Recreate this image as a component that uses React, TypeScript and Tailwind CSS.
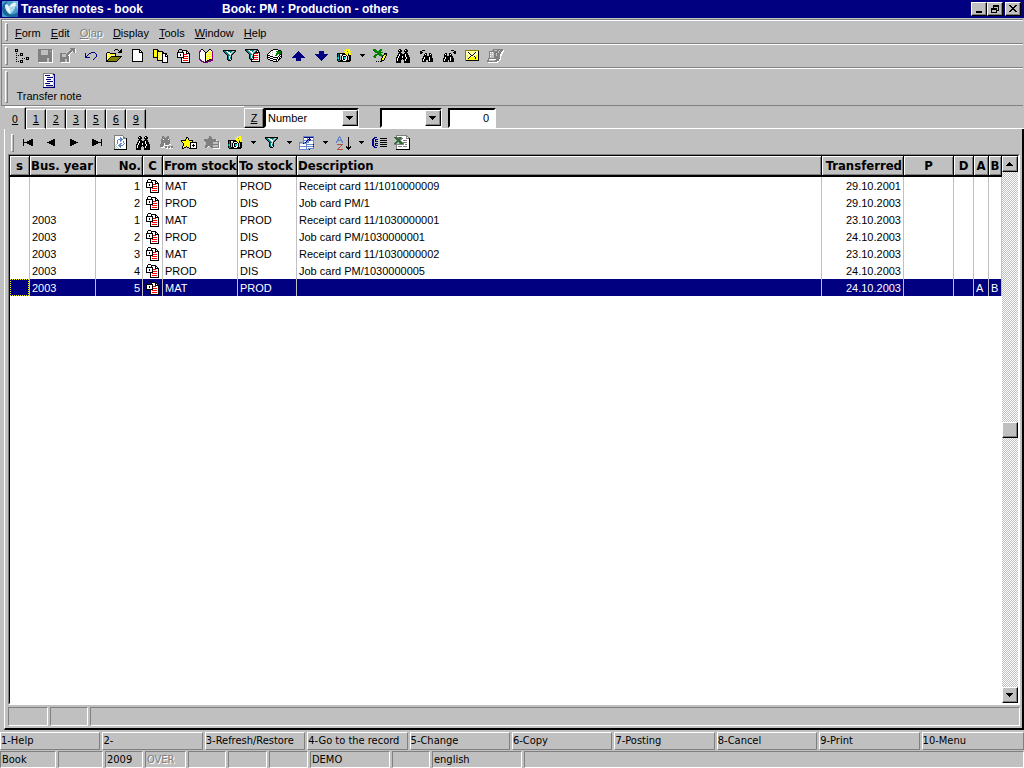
import React from 'react';

const PALETTE: Record<string, string> = {
  k: '#000000',
  w: '#ffffff',
  g: '#808080',
  l: '#c0c0c0',
  y: '#ffff00',
  c: '#ffff99',
  o: '#808000',
  b: '#000080',
  s: '#6688cc',
  t: '#008080',
  a: '#00e0e0',
  r: '#ff0000',
  d: '#b05040',
  p: '#800080',
  n: '#008000',
  m: '#a8d0b8',
  e: '#2f6b2f',
};

// Each string is a row of pixels, each letter a palette colour
const ICONS: Record<string, string[]> = {
  tree: [
    'kkk............',
    'k.k............',
    'kkk............',
    '...............',
    '.k...kkk.......',
    '.....k.k.......',
    '.k.k.kkk.......',
    '...............',
    '.k.........kkk.',
    '.......k.k.k.k.',
    '.k.........kkk.',
    '.....kkk.......',
    '.k.k.k.k.......',
    '.....kkk.......',
  ],
  save: [
    'gggggggggggggg.',
    'ggglllllllggggw',
    'ggglllllllgglgw',
    'ggglllllllggggw',
    'ggglllllllggggw',
    'ggglllllllggggw',
    'ggggggggggggggw',
    'ggggggggggggggw',
    'ggggggggggggggw',
    'gggggggggllgggw',
    'gggggggggllgggw',
    'gggggggggllgggw',
    'gggggggggllgggw',
    '.wwwwwwwwwwwwww',
  ],
  saveAs: [
    '..........ggggg.',
    '...........ggggw',
    '..........gggggw',
    '.........gggwggw',
    '........gggw..gw',
    'gggggg.gggw.....',
    'ggllllgggw......',
    'ggllllggww......',
    'ggllllgggw......',
    'gggggggggw......',
    'gggggggggw......',
    'gggggllggw......',
    'gggggllggw......',
    'gggggllggw......',
    '.wwwwwwwww......',
  ],
  undo: [
    '......bbbb...',
    'b...bb....b..',
    'b..b.......b.',
    'b.b........b.',
    'bb.........b.',
    'bbbbb.....b..',
    '.........b...',
    '........b....',
  ],
  open: [
    '.........kkk...k',
    '........k...k.kk',
    '.............kkk',
    '.kkk........kkkk',
    'kycykkkkkk......',
    'kcycycycyk......',
    'kycycycyck......',
    'kcycykkkkkkkkkkk',
    'kycykoooooooook.',
    'kcykoooooooook..',
    'kykoooooooook...',
    'kkoooooooook....',
    'kkkkkkkkkkk.....',
  ],
  page: [
    'kkkkkkkk...',
    'kwwwwwwkk..',
    'kwwwwwwkwk.',
    'kwwwwwwkkkk',
    'kwwwwwwwwwk',
    'kwwwwwwwwwk',
    'kwwwwwwwwwk',
    'kwwwwwwwwwk',
    'kwwwwwwwwwk',
    'kwwwwwwwwwk',
    'kwwwwwwwwwk',
    'kwwwwwwwwwk',
    'kkkkkkkkkkk',
  ],
  copies: [
    'kkkkk..........',
    'kyyykk.........',
    'kywykkkkkk.....',
    'kyyykcyyckk....',
    'kywykyccykkkkk.',
    'kyyykcycckwwkk.',
    'kywykyccykwwkwk',
    'kyyykcycckwwkkk',
    'kkkkkyccykwwwwk',
    '....kcycckwwwwk',
    '....kyccykwwwwk',
    '....kkkkkkwwwwk',
    '.........kwwwwk',
    '.........kkkkkk',
  ],
  lockPage: [
    '..kkk........',
    '.k...kkkkk...',
    '.k...kwwwkk..',
    'kkkkkkkwwkwk.',
    'kwwwwwkwwkkkk',
    'kwwkwwkrrrwwk',
    'kwwkwwkwwwwwk',
    'kwwwwwkrrrrwk',
    'kkkkkkkwwwwwk',
    '....kwrrrrrwk',
    '....kwwwwwwwk',
    '....kwrrrrrwk',
    '....kwwwwwwwk',
    '....kkkkkkkkk',
  ],
  book: [
    '..kk......kk...',
    '.pwwk....kcck..',
    'ppwwwk..kcccwp.',
    'pwwwwwkkcycycp.',
    'pwwwwwkcycycyp.',
    'pwwwwwkycycycp.',
    'pwwwwwkcycycyp.',
    'pwwwwwkycycycp.',
    'pwwwwwkcycycyp.',
    'pwwwwwkycycycp.',
    'ppwwwwkcyckkpp.',
    '.ppwwwkckkpppp.',
    '..pppwkkpppp...',
    '....ppkpp......',
  ],
  filter: [
    'kkkkkkkkkkkkk',
    'kttlwttttlltk',
    '.kttlwwtlltk.',
    '..kttlwwltk..',
    '...kttlwtk...',
    '....kttlk....',
    '....ktwlk....',
    '....ktwtk....',
    '....ktwtk....',
    '....kttwk....',
    '.....kkk.....',
  ],
  filterPage: [
    'kkkkkkkkkkkkk..',
    'kttlwttttlltkk.',
    '.kttlwwtlltkwk.',
    '..kttlwwltkkkkk',
    '...kttlwtkrrrwk',
    '....kttlkwwwwwk',
    '....ktwlkrrrrwk',
    '....ktwtkwwwwwk',
    '....ktwtkrrrrwk',
    '....kttwkwwwwwk',
    '.....kkkrrrrrwk',
    '......kwwwwwwwk',
    '......kkkkkkkkk',
  ],
  books: [
    '......kkkkk.....',
    '....kkwwwwwkkk..',
    '...kwwwwwnnnnnk.',
    '..kwwlwwwwnnnnk.',
    '.kwlwwwwwnnnnnk.',
    'kwwwwlwwwnnwnkk.',
    'kkkwwwwwnnwwkwk.',
    'kwwkkkwwwwwkwkk.',
    'kkkwwwkkkkkwkwk.',
    'kwwkkkwwwwkwkk..',
    '.kkwwwkkkkwkk...',
    '...kkkwwwkwk....',
    '......kkkkk.....',
  ],
  up: [
    '......b......',
    '.....bbb.....',
    '....bbbbb....',
    '...bbbbbbb...',
    '..bbbbbbbbb..',
    '.bbbbbbbbbbb.',
    'bbbbbbbbbbbbb',
    '....bbbbb....',
    '....bbbbb....',
    '....bbbbb....',
  ],
  down: [
    '....bbbbb....',
    '....bbbbb....',
    '....bbbbb....',
    'bbbbbbbbbbbbb',
    '.bbbbbbbbbbb.',
    '..bbbbbbbbb..',
    '...bbbbbbb...',
    '....bbbbb....',
    '.....bbb.....',
    '......b......',
  ],
  camera: [
    '.........y.yy.',
    '.......y.yyyy.',
    '........yyoyyy',
    '.......yyyyyy.',
    'kkkkkkkkyyyoyy',
    'ktkwwkkkkyykyy',
    'ktkllkwwwkykkk',
    'ktklkwkkkwklkk',
    'taklkwkaawklkk',
    'taklkwkaawklkk',
    'ktklkwkkwwklkk',
    'kttkkkwwwkkkkk',
    '.kkkkkkkkkkkk.',
  ],
  caret: ['kkkkk', '.kkk.', '..k..'],
  edit: [
    'nnn....nn......',
    'nnnn..nnn......',
    '.nnnnnnn.......',
    '..nnnnnnnn.....',
    '....nnnn...kkk.',
    '..nnnnnnn..krk.',
    '.nnn..nnnnkyyk.',
    'nnn.....nkyyk..',
    '.nn......kyyk..',
    '........kyyk...',
    '........kyyk...',
    '........kkk....',
    '...k.k.kk......',
  ],
  binoculars: [
    '...kk....kk....',
    '..kwkk..kwkk...',
    '..kkkk..kkkk...',
    '...kk....kk....',
    '..kkkk..kkkk...',
    '..kwkkkkkwkk...',
    '.kkwkkkkkwkkk..',
    '.kwkkkwkkwkkk..',
    'kkwkkkwkkkwkkk.',
    'kwkkkkkkkkwkkk.',
    'kwkkkk.kkwkkkk.',
    'kwkkk...kwkkkk.',
    'kkkkk...kkkkkk.',
    'kkkkk...kkkkkk.',
  ],
  findPrev: [
    '..kkk........',
    'kk...........',
    'kkk..........',
    'kk...kk..kk..',
    '....kwk..kwk.',
    '....kkk..kkk.',
    '...kkkkkkkkk.',
    '...kwkkkkwkk.',
    '..kkwkkkkwkkk',
    '..kwkkkkkwkkk',
    '..kwkk..kwkkk',
    '..kkkk..kkkkk',
  ],
  findNext: [
    '........kkk..',
    '...........kk',
    '..........kkk',
    '..kk..kk...kk',
    '.kwk..kwk....',
    '.kkk..kkk....',
    '.kkkkkkkkk...',
    '.kwkkkkwkk...',
    'kkwkkkkwkkk..',
    'kwkkkkkwkkk..',
    'kwkkk.kwkkk..',
    'kkkkk.kkkkk..',
  ],
  mail: [
    'oooooooooooooo',
    'owccccccccccwk',
    'ocwkcccccckwck',
    'occwkcccckwcck',
    'occcwkcckwccck',
    'ocyccwkkwccyck',
    'ocycckccckcyck',
    'ocyckyyyyckyck',
    'ocykyyyyyykyck',
    'ocyyyyyyyyyyck',
    'okkkkkkkkkkkkk',
  ],
  stackOff: [
    '......gggggggggg.',
    '.....gglllgglgggw',
    '..ggggggggglgggww',
    '..gwlwlgggglggww.',
    '..gllllgglggggww.',
    '..gwlwlgglgggww..',
    '..gllllgglgggww..',
    '..gwlllggggggw...',
    '..gllllggggggw...',
    '.ggggggggggggw...',
    '.gwwwwwwwgggww...',
    'ggllllllggggw....',
    'ggggggggggww.....',
    '.wwwwwwwwww......',
  ],
  note: [
    'ggggggggggg.',
    'gwwwwwwwwlbb',
    'gwbbbbbwwwlb',
    'gwwwwwwwwllb',
    'gwwwbbbbbbwb',
    'gwwwwwwwwwlb',
    'gwwbbbbbwwlb',
    'gwwwwwwwwwlb',
    'gwwwbbbbbbwb',
    'gwwwwwwwwwlb',
    'gwbbbbbwwwlb',
    'gwwwwwwwwwlb',
    'gwwbbbbbbbwb',
    'gwwlllllllsb',
    'bbbbbbbbbbbb',
  ],
  first: [
    'k.......kk',
    'k.....kkkk',
    'k...kkkkkk',
    'kkkkkkkkkk',
    'k...kkkkkk',
    'k.....kkkk',
    'k.......kk',
  ],
  prev: [
    '......kk',
    '....kkkk',
    '..kkkkkk',
    'kkkkkkkk',
    '..kkkkkk',
    '....kkkk',
    '......kk',
  ],
  next: [
    'kk......',
    'kkkk....',
    'kkkkkk..',
    'kkkkkkkk',
    'kkkkkk..',
    'kkkk....',
    'kk......',
  ],
  last: [
    'kk.......k',
    'kkkk.....k',
    'kkkkkk...k',
    'kkkkkkkkkk',
    'kkkkkk...k',
    'kkkk.....k',
    'kk.......k',
  ],
  refresh: [
    'ggggggggg....',
    'gwwwwwwwwg...',
    'gwwwwwswwgg..',
    'gwwwwwsswgggk',
    'gwwwssssswwwk',
    'gwwswwsswwwwk',
    'gwwswwswwswwk',
    'gwwswwwwwswwk',
    'gwwswwsswwswk',
    'gwmwwsswwswwk',
    'gmwwssssswwwk',
    'gwmwwsswwwwwk',
    'gmwmwwswwwwwk',
    'gwmwmwwwwwwwk',
    'kkkkkkkkkkkkk',
  ],
  findOff: [
    '..gg...gg....',
    '..ggg.ggg....',
    '..ggggggg....',
    '.ggwggggwg...',
    '.ggggggggg...',
    '.ggggggggg...',
    '.ggggggggg...',
    '.gggwggggg...',
    'ggggwggggww..',
    'ggggwwwww....',
    'gggw.gg.gg.gg',
    '.wwwwggwggwgg',
    '......ww.ww.w',
  ],
  starAdd: [
    '.....kk.........',
    '.....kyk........',
    '....kyyk........',
    'kkkkkyyykkkk....',
    'kyyyyyyyyyyk....',
    '.kyyyyyyykkkkkkk',
    '..kyyyyyykwwwwwk',
    '..kyyyyyykwwkwwk',
    '..kyyyyyykwkkkwk',
    '.kyyykyyykwwkwwk',
    '.kykk.kkykwwwwwk',
    '.kk.....kkkkkkkk',
  ],
  starRemove: [
    '.....gg.........',
    '.....ggg........',
    '....gggg........',
    'gggggggggggg....',
    'ggggggggggggw...',
    '.gggggggggggggg.',
    '..ggggggglllllgw',
    '..ggggggglllllgw',
    '..gggggggggggggw',
    '.gggggggglllllgw',
    '.gggw.ggglllllgw',
    '.ggw...ggggggggw',
    '.........wwwwwww',
  ],
  windows: [
    '....sssssssssss.',
    '....sbbbbbbbbbs.',
    '....swwwswbwwws.',
    '....swwwsbbbwws.',
    '....ssssbsbssss.',
    '....swwbsswwwws.',
    'ssssssbssswwwws.',
    'slllbssswwwwwws.',
    'swwwwwwsssssssb.',
    'swwwwwwswwwwwws.',
    'ssssssssssssssb.',
    'swwwwwwswwwwwws.',
    'swwwwwwswssssss.',
    'ssssssssssb.....',
  ],
  sort: [
    '...s...........',
    '..sss.......k..',
    '..s.s.......k..',
    '.ss.ss......k..',
    '.sssss......k..',
    'ss...ss.....k..',
    's.....s.....k..',
    '............k..',
    '.dddddd.....k..',
    '.....d......k..',
    '....d.....k.k.k',
    '...d......kkkkk',
    '..d........kkk.',
    '.dddddd.....k..',
  ],
  list: [
    '...bbb..........',
    '..bb.....kkkkkkk',
    '.bb.bbb.........',
    '.bb.b....kkkkkkk',
    '.bb.bbb.........',
    '.bb......kkkkkkk',
    '.bb.bbb.........',
    '.bb.b....kkkkkkk',
    '.bb.bbb.........',
    '..bb.....kkkkkkk',
    '...bbb..........',
  ],
  excel: [
    '..ggggggggggg...',
    '..gwwwwwwwwwgg..',
    'eeeggeegwwwwgwg.',
    '.eeegeeggwwwgggk',
    '..eeeeggwwwwwwwk',
    '...eeegwwggggwwk',
    '..eeeeegwwwwwwwk',
    '.eegmeeegggggwwk',
    'eegmmgeeegwwwwwk',
    'ggggggggggwggwwk',
    '..gwwwwwwwwwwwwk',
    '..gwggggwggggwwk',
    '..gwwwwwwwwwwwwk',
    '..gwwwwwwwwwwwwk',
    '..kkkkkkkkkkkkkk',
  ],
  min: ['........', '........', '........', '........', '........', '........', '.kkkkkk.', '.kkkkkk.'],
  restore: ['..kkkkkk', '..kkkkkk', '..k....k', 'kkkkkk.k', 'kkkkkk.k', 'k....kkk', 'k....k..', 'kkkkkk..'],
  close: ['kk....kk', '.kk..kk.', '..kkkk..', '...kk...', '..kkkk..', '.kk..kk.', 'kk....kk', '........'],
  arrowUp: ['...k....', '..kkk...', '.kkkkk..', 'kkkkkkk.'],
  arrowDown: ['kkkkkkk.', '.kkkkk..', '..kkk...', '...k....'],
};

// Toolbar cells are odd wide and even high, so the canvas is rounded up to keep pixels whole
function Icon({ name, toolbar }: { name: string; toolbar?: boolean }) {
  const rows = ICONS[name];
  const width = toolbar ? rows[0].length | 1 : rows[0].length;
  const height = toolbar ? rows.length + (rows.length % 2) : rows.length;
  return (
    <svg
      width={width}
      height={height}
      viewBox={`0 0 ${width} ${height}`}
      shapeRendering="crispEdges"
      aria-hidden="true"
      className="shrink-0"
    >
      {rows.map((row, y) =>
        row.split('').map((c, x) =>
          PALETTE[c] ? <rect key={`${x}-${y}`} x={x} y={y} width="1" height="1" fill={PALETTE[c]} /> : null
        )
      )}
    </svg>
  );
}

function Logo() {
  return (
    <svg width="16" height="16" viewBox="0 0 16 16" aria-hidden="true">
      <rect width="16" height="16" rx="1" fill="#4a9cc8" />
      <path d="M0 8 Q1 16 9 16 L16 16 L16 11 Q8 16 5 11 Q1 6 6 0 Q0 2 0 8Z" fill="#17679c" />
      <path d="M10 0 L16 0 L16 9 Q14 5 10 0Z" fill="#7fc0dc" />
      <path d="M3 4 Q6 2 7 6 Q10 1 14 2 Q14 8 8 13 Q3 10 3 4Z" fill="#e4f4fa" />
      <path d="M7 6 Q9 8 8 13 Q13 9 13 5 Q10 6 7 6Z" fill="#a9d5e8" />
    </svg>
  );
}

const Grip = () => (
  <span className="w-[3px] self-stretch my-[2px] mr-[3px] border border-l-white border-t-white border-r-[#808080] border-b-[#808080]" />
);

interface ToolProps {
  name: string;
  label: string;
  disabled?: boolean;
}

function Tool({ name, label, disabled }: ToolProps) {
  return (
    <button
      type="button"
      aria-label={label}
      disabled={disabled}
      className={`h-5 flex items-center justify-center shrink-0 ${name === 'caret' ? 'w-[13px]' : 'w-[23px]'}`}
    >
      <Icon name={name} toolbar />
    </button>
  );
}

const RAISED = 'bg-[#c0c0c0] border border-t-white border-l-white border-r-black border-b-black shadow-[inset_-1px_-1px_#808080]';
const SUNKEN = 'border border-t-[#808080] border-l-[#808080] border-r-white border-b-white';
const BAR = 'flex items-center border-t border-t-white border-b border-b-[#808080] pl-[3px]';

const MENU = ['Form', 'Edit', 'Olap', 'Display', 'Tools', 'Window', 'Help'];

const MAIN_TOOLS: ToolProps[] = [
  { name: 'tree', label: 'Tree' },
  { name: 'save', label: 'Save', disabled: true },
  { name: 'saveAs', label: 'Save as', disabled: true },
  { name: 'undo', label: 'Undo' },
  { name: 'open', label: 'Open' },
  { name: 'page', label: 'New' },
  { name: 'copies', label: 'Copy' },
  { name: 'lockPage', label: 'Locked record' },
  { name: 'book', label: 'Book' },
  { name: 'filter', label: 'Filter' },
  { name: 'filterPage', label: 'Filter record' },
  { name: 'books', label: 'Books' },
  { name: 'up', label: 'Up' },
  { name: 'down', label: 'Down' },
  { name: 'camera', label: 'Snapshot' },
  { name: 'caret', label: 'Snapshot options' },
  { name: 'edit', label: 'Edit' },
  { name: 'binoculars', label: 'Find' },
  { name: 'findPrev', label: 'Find previous' },
  { name: 'findNext', label: 'Find next' },
  { name: 'mail', label: 'Mail' },
  { name: 'stackOff', label: 'Attachments', disabled: true },
];

const GRID_TOOLS: ToolProps[] = [
  { name: 'first', label: 'First' },
  { name: 'prev', label: 'Previous' },
  { name: 'next', label: 'Next' },
  { name: 'last', label: 'Last' },
  { name: 'refresh', label: 'Refresh' },
  { name: 'binoculars', label: 'Find' },
  { name: 'findOff', label: 'Find again', disabled: true },
  { name: 'starAdd', label: 'Add mark' },
  { name: 'starRemove', label: 'Remove mark', disabled: true },
  { name: 'camera', label: 'Snapshot' },
  { name: 'caret', label: 'Snapshot options' },
  { name: 'filter', label: 'Filter' },
  { name: 'caret', label: 'Filter options' },
  { name: 'windows', label: 'Columns' },
  { name: 'caret', label: 'Column options' },
  { name: 'sort', label: 'Sort' },
  { name: 'caret', label: 'Sort options' },
  { name: 'list', label: 'Totals' },
  { name: 'excel', label: 'Export to Excel' },
];

const TABS = ['0', '1', '2', '3', '5', '6', '9'];

const COLUMNS = [
  { title: 's', width: 'w-[20px]', align: 'text-center' },
  { title: 'Bus. year', width: 'w-[66px]', align: 'text-left' },
  { title: 'No.', width: 'w-[47px]', align: 'text-right' },
  { title: 'C', width: 'w-[20px]', align: 'text-center' },
  { title: 'From stock', width: 'w-[75px]', align: 'text-left' },
  { title: 'To stock', width: 'w-[59px]', align: 'text-left' },
  { title: 'Description', width: '', align: 'text-left' },
  { title: 'Transferred', width: 'w-[82px]', align: 'text-right' },
  { title: 'P', width: 'w-[50px]', align: 'text-center' },
  { title: 'D', width: 'w-[20px]', align: 'text-center' },
  { title: 'A', width: 'w-[15px]', align: 'text-center' },
  { title: 'B', width: 'w-[13px]', align: 'text-center' },
];

const ROWS = [
  ['', '1', 'MAT', 'PROD', 'Receipt card 11/1010000009', '29.10.2001', '', ''],
  ['', '2', 'PROD', 'DIS', 'Job card PM/1', '29.10.2003', '', ''],
  ['2003', '1', 'MAT', 'PROD', 'Receipt card 11/1030000001', '23.10.2003', '', ''],
  ['2003', '2', 'PROD', 'DIS', 'Job card PM/1030000001', '24.10.2003', '', ''],
  ['2003', '3', 'MAT', 'PROD', 'Receipt card 11/1030000002', '23.10.2003', '', ''],
  ['2003', '4', 'PROD', 'DIS', 'Job card PM/1030000005', '24.10.2003', '', ''],
  ['2003', '5', 'MAT', 'PROD', '', '24.10.2003', 'A', 'B'],
];

const FKEYS = [
  '1-Help',
  '2-',
  '3-Refresh/Restore',
  '4-Go to the record',
  '5-Change',
  '6-Copy',
  '7-Posting',
  '8-Cancel',
  '9-Print',
  '10-Menu',
];

const STATUS = [
  { text: 'Book', width: 'w-[56px]' },
  { text: '', width: 'w-[45px]' },
  { text: '2009', width: 'w-[38px]' },
  { text: 'OVER', width: 'w-[41px]', off: true },
  { text: '', width: 'w-[38px]' },
  { text: '', width: 'w-[39px]' },
  { text: '', width: 'w-[39px]' },
  { text: 'DEMO', width: 'w-[80px]' },
  { text: '', width: 'w-[38px]' },
  { text: 'english', width: 'w-[90px]' },
  { text: '', width: 'flex-1' },
];

function Grid() {
  const cell = 'border-r border-[#c0c0c0] overflow-hidden whitespace-nowrap px-[2px] pt-px pb-0';
  return (
    <div className="flex flex-1 min-h-0 border border-t-black border-l-black border-r-white border-b-white">
      <div className="flex-1 min-w-0 bg-white">
        <table className="w-full table-fixed border-separate border-spacing-0">
          <thead>
            <tr className="h-[21px] bg-[#c0c0c0] text-[13px] leading-[19px] font-bold font-['DejaVu_Sans_Condensed','DejaVu_Sans',sans-serif]">
              {COLUMNS.map((col) => (
                <th
                  key={col.title}
                  scope="col"
                  className={`${col.width} ${col.align} border-r border-r-black border-b-2 border-b-black shadow-[inset_1px_1px_#fff,inset_-1px_-1px_#808080] px-px py-0 overflow-hidden whitespace-nowrap`}
                >
                  {col.title}
                </th>
              ))}
            </tr>
          </thead>
          <tbody>
            {ROWS.map(([year, no, from, to, description, date, a, b], i) => {
              const selected = i === ROWS.length - 1;
              return (
                <tr key={i} className={`h-[17px] leading-4 ${selected ? 'bg-[#000080] text-white' : ''}`}>
                  <td className="border-r border-[#c0c0c0] p-0">
                    {selected && <div className="h-[17px] border border-dotted border-[#ffff00]" />}
                  </td>
                  <td className={cell}>{year}</td>
                  <td className={`${cell} text-right`}>{no}</td>
                  <td className={cell}>
                    <span className="flex items-center justify-center h-4">
                      <Icon name="lockPage" />
                    </span>
                  </td>
                  <td className={cell}>{from}</td>
                  <td className={cell}>{to}</td>
                  <td className={cell}>{description}</td>
                  <td className={`${cell} text-right`}>{date}</td>
                  <td className={cell} />
                  <td className={cell} />
                  <td className={cell}>{a}</td>
                  <td className={cell}>{b}</td>
                </tr>
              );
            })}
          </tbody>
        </table>
      </div>
      {/* Scrollbar */}
      <div className="w-4 flex flex-col items-stretch bg-[repeating-conic-gradient(#c0c0c0_0_25%,#fff_0_50%)] bg-[size:2px_2px]">
        <button type="button" aria-label="Scroll up" className={`h-4 flex items-center justify-center ${RAISED}`}>
          <Icon name="arrowUp" />
        </button>
        <div className="flex-1" />
        <div className={`h-4 ${RAISED}`} />
        <div className="flex-1" />
        <button type="button" aria-label="Scroll down" className={`h-4 flex items-center justify-center ${RAISED}`}>
          <Icon name="arrowDown" />
        </button>
      </div>
    </div>
  );
}

function Combo({ label, value, width }: { label: string; value: string; width: string }) {
  return (
    <div className={`relative flex h-5 ${width}`}>
      <select
        aria-label={label}
        className="w-full appearance-none rounded-none bg-white pl-[2px] pr-5 border-2 border-t-black border-l-black border-r-white border-b-white"
      >
        <option>{value}</option>
      </select>
      <span className={`pointer-events-none absolute right-px inset-y-[2px] w-4 flex items-center justify-center ${RAISED}`}>
        <Icon name="arrowDown" />
      </span>
    </div>
  );
}

export default function App() {
  return (
    <div className="h-screen flex flex-col overflow-hidden bg-[#c0c0c0] text-black text-[11px] leading-4 font-['Liberation_Sans',Arial,sans-serif]">
      {/* Title bar */}
      <header className="h-[18px] flex items-center bg-[#000080] text-white text-[12px] font-bold pl-[2px] pr-[3px]">
        <Logo />
        <h1 className="pl-[3px] w-[204px] whitespace-nowrap">Transfer notes - book</h1>
        <span className="flex-1 whitespace-nowrap">Book: PM : Production - others</span>
        <div className="flex">
          <button type="button" aria-label="Minimize" className={`w-4 h-[14px] flex items-center justify-center ${RAISED}`}>
            <Icon name="min" />
          </button>
          <button type="button" aria-label="Restore" className={`w-4 h-[14px] flex items-center justify-center ${RAISED}`}>
            <Icon name="restore" />
          </button>
          <button type="button" aria-label="Close" className={`ml-[2px] w-4 h-[14px] flex items-center justify-center ${RAISED}`}>
            <Icon name="close" />
          </button>
        </div>
      </header>

      {/* Menu and toolbars */}
      <div className="mt-px mx-px border-t border-l border-[#808080]">
        <nav className={`${BAR} h-6`}>
          <Grip />
          <div className="flex gap-[10px] pl-1 pt-[2px]">
            {MENU.map((item) => (
              <button
                key={item}
                type="button"
                disabled={item === 'Olap'}
                className="disabled:text-[#808080] disabled:[text-shadow:1px_1px_#fff]"
              >
                <span className="underline">{item[0]}</span>
                {item.slice(1)}
              </button>
            ))}
          </div>
        </nav>
        <div className={`${BAR} h-6`}>
          <Grip />
          {MAIN_TOOLS.map((tool) => (
            <Tool key={tool.label} {...tool} />
          ))}
        </div>
        <div className={`${BAR} h-[38px]`}>
          <Grip />
          <button type="button" className="w-16 ml-[6px] pt-[3px] flex flex-col items-center">
            <Icon name="note" />
            <span className="whitespace-nowrap">Transfer note</span>
          </button>
        </div>
      </div>

      {/* Tabs and lookup */}
      <div className="flex items-end h-[23px] pl-[5px]">
        <div role="tablist" className="flex items-end w-[239px] h-full border-t border-white font-['DejaVu_Sans_Condensed','DejaVu_Sans',sans-serif]">
          {TABS.map((tab, i) => (
            <button
              key={tab}
              type="button"
              role="tab"
              aria-selected={i === 0}
              className={`underline pt-[2px] border-t border-t-white border-r border-r-black shadow-[inset_-1px_0_#808080] ${
                i === 0 ? 'w-[21px] h-[22px]' : 'w-5 h-5 border-l border-l-white border-b border-b-white'
              }`}
            >
              {tab}
            </button>
          ))}
          <div className="flex-1 border-b border-white" />
        </div>
        <div className="flex flex-1 border-b border-white">
          <button type="button" className={`w-5 h-5 underline ${RAISED}`}>
            Z
          </button>
          <Combo label="Sort by" value="Number" width="w-[95px]" />
          <div className="w-[21px]" />
          <Combo label="Condition" value="" width="w-[62px]" />
          <div className="w-[6px]" />
          <input
            type="text"
            aria-label="Value"
            defaultValue="0"
            className="w-12 h-5 bg-white text-right pr-[5px] border-2 border-t-black border-l-black border-r-white border-b-white"
          />
        </div>
      </div>

      {/* Tab page */}
      <main className="flex-1 min-h-0 flex flex-col ml-1 border-l border-l-white border-r-2 border-r-black border-b-2 border-b-black pl-[3px] pr-[2px]">
        <div className="flex items-center h-[25px] pl-[3px] pt-[3px]">
          <Grip />
          <div className="flex">
            {GRID_TOOLS.map((tool) => (
              <Tool key={tool.label} {...tool} />
            ))}
          </div>
        </div>
        <div className="flex flex-col flex-1 min-h-0 border border-t-[#808080] border-l-[#808080] border-r-white border-b-white">
          <Grid />
        </div>
        <div className="flex gap-[2px] h-[19px] mt-[2px] mb-[2px]">
          <div className={`w-10 ${SUNKEN}`} />
          <div className={`w-[38px] ${SUNKEN}`} />
          <div className={`flex-1 ${SUNKEN}`} />
        </div>
      </main>

      {/* Function keys and status */}
      <footer className="mt-[2px] font-['DejaVu_Sans_Condensed','DejaVu_Sans',sans-serif]">
        <div className="grid grid-cols-10">
          {FKEYS.map((key) => (
            <button
              key={key}
              type="button"
              className="h-[18px] mr-[2px] last:mr-0 text-left whitespace-nowrap overflow-hidden border border-t-white border-l-white border-r-[#808080] border-b-[#808080]"
            >
              {key}
            </button>
          ))}
        </div>
        <div className="flex gap-[2px] mt-px">
          {STATUS.map(({ text, width, off }, i) => (
            <div
              key={i}
              className={`h-[17px] pl-px whitespace-nowrap ${width} ${SUNKEN} ${off ? 'text-[#808080] [text-shadow:1px_1px_#fff]' : ''}`}
            >
              {text}
            </div>
          ))}
        </div>
      </footer>
    </div>
  );
}
